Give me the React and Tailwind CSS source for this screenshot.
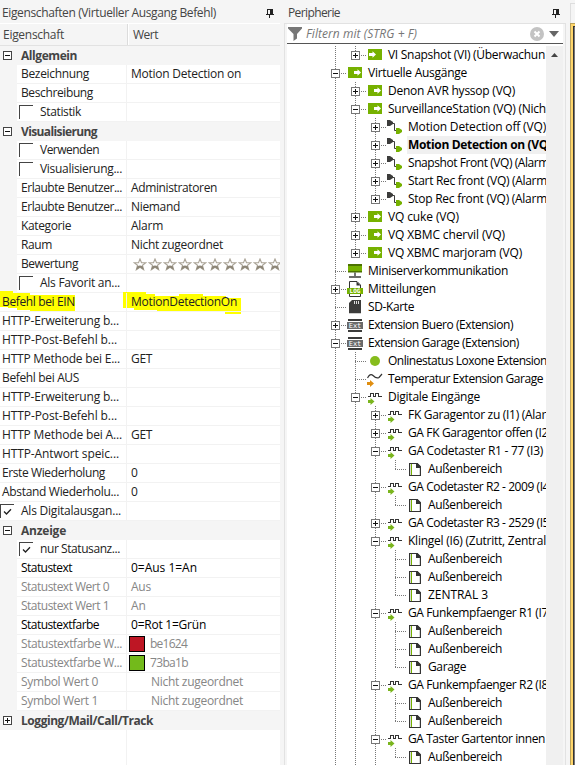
import { useLayoutEffect, useRef } from 'react';

// Text run whose letter spacing is tuned so that it takes up a given width.
function T({ w, children, className = '' }) {
  const ref = useRef(null);
  useLayoutEffect(() => {
    const el = ref.current;
    if (!w) return;
    el.style.letterSpacing = '0px';
    const natural = el.getBoundingClientRect().width;
    el.style.letterSpacing = `${(w - natural) / el.textContent.length}px`;
  }, [w]);
  return (
    <span ref={ref} className={`shrink-0 whitespace-pre ${className}`}>
      {children}
    </span>
  );
}

function Pin() {
  return (
    <svg width="8" height="9" viewBox="0 0 8 9" shapeRendering="crispEdges" className="shrink-0" fill="#222">
      <path d="M1 0h6v5h1v1H0V5h1zM2 1v4h2V1zM3 6h1v3H3z" fillRule="evenodd" />
    </svg>
  );
}

function Toggle({ open, tone = '#444' }) {
  return (
    <svg width="9" height="9" viewBox="0 0 9 9" shapeRendering="crispEdges" className="shrink-0">
      <rect x="0.5" y="0.5" width="8" height="8" fill="#fff" stroke={tone} />
      <path d={open ? 'M2 4h5v1H2z' : 'M2 4h5v1H2zM4 2h1v5H4z'} fill="#111" />
    </svg>
  );
}

function Check({ on }) {
  return (
    <div className="flex h-[14px] w-[14px] shrink-0 items-center justify-center border-t border-l border-[#444] bg-white">
      {on && (
        <svg width="9" height="8" viewBox="0 0 9 8">
          <path d="M1 3.5 3.5 6 8 1.2" fill="none" stroke="#222" strokeWidth="1.3" />
        </svg>
      )}
    </div>
  );
}

function Stars() {
  return (
    <div className="ml-[2px] flex shrink-0 gap-px pt-px">
      {Array.from({ length: 10 }, (_, i) => (
        <svg key={i} width="14" height="13" viewBox="0 0 14 13" className="shrink-0">
          <path d="M7 1 8.5 4.700H12.800L9.500 7.300 10.700 11.800 7 9.400 3.300 11.800 4.500 7.300 1.200 4.700H5.500Z" fill="#fff" stroke="#aaa497" strokeWidth="1.100" />
          <path d="M4.400 8 7 7.400 9.600 8 10.700 11.800 7 9.600 3.300 11.800Z" fill="#8d8677" />
        </svg>
      ))}
    </div>
  );
}

// kind: g = group header, i = indented property, p = plain property
const props = [
  { k: 'g', t: 'Allgemein', w: 56, open: true },
  { k: 'i', t: 'Bezeichnung', w: 68, v: 'Motion Detection on', vw: 110 },
  { k: 'i', t: 'Beschreibung', w: 72 },
  { k: 'i', t: 'Statistik', w: 41, c: 'off' },
  { k: 'g', t: 'Visualisierung', w: 76, open: true },
  { k: 'i', t: 'Verwenden', w: 59, c: 'off' },
  { k: 'i', t: 'Visualisierung...', w: 82, c: 'off' },
  { k: 'i', t: 'Erlaubte Benutzer...', w: 101, v: 'Administratoren', vw: 86 },
  { k: 'i', t: 'Erlaubte Benutzer...', w: 101, v: 'Niemand', vw: 49 },
  { k: 'i', t: 'Kategorie', w: 50, v: 'Alarm', vw: 32 },
  { k: 'i', t: 'Raum', w: 31, v: 'Nicht zugeordnet', vw: 92 },
  { k: 'i', t: 'Bewertung', w: 57, stars: true },
  { k: 'i', t: 'Als Favorit an...', w: 80, c: 'off' },
  { k: 'p', t: 'Befehl bei EIN', w: 73, v: 'MotionDetectionOn', vw: 106, mark: true },
  { k: 'p', t: 'HTTP-Erweiterung b...', w: 117 },
  { k: 'p', t: 'HTTP-Post-Befehl b...', w: 115 },
  { k: 'p', t: 'HTTP Methode bei E...', w: 118, v: 'GET', vw: 21 },
  { k: 'p', t: 'Befehl bei AUS', w: 77 },
  { k: 'p', t: 'HTTP-Erweiterung b...', w: 117 },
  { k: 'p', t: 'HTTP-Post-Befehl b...', w: 115 },
  { k: 'p', t: 'HTTP Methode bei A...', w: 120, v: 'GET', vw: 21 },
  { k: 'p', t: 'HTTP-Antwort speic...', w: 117 },
  { k: 'p', t: 'Erste Wiederholung', w: 103, v: '0', vw: 7 },
  { k: 'p', t: 'Abstand Wiederholu...', w: 117, v: '0', vw: 7 },
  { k: 'p', t: 'Als Digitalausgan...', w: 100, c: 'on' },
  { k: 'g', t: 'Anzeige', w: 45, open: true },
  { k: 'i', t: 'nur Statusanz...', w: 80, c: 'on' },
  { k: 'i', t: 'Statustext', w: 51, v: '0=Aus 1=An', vw: 66, black: true },
  { k: 'i', t: 'Statustext Wert 0', w: 88, v: 'Aus', vw: 20, dim: true },
  { k: 'i', t: 'Statustext Wert 1', w: 88, v: 'An', vw: 15, dim: true },
  { k: 'i', t: 'Statustextfarbe', w: 78, v: '0=Rot 1=Grün', vw: 75, black: true },
  { k: 'i', t: 'Statustextfarbe W...', w: 101, v: 'be1624', vw: 37, dim: true, sw: 'red' },
  { k: 'i', t: 'Statustextfarbe W...', w: 101, v: '73ba1b', vw: 38, dim: true, sw: 'green' },
  { k: 'i', t: 'Symbol Wert 0', w: 77, v: 'Nicht zugeordnet', vw: 92, dim: true, sw: 'none' },
  { k: 'i', t: 'Symbol Wert 1', w: 77, v: 'Nicht zugeordnet', vw: 92, dim: true, sw: 'none' },
  { k: 'g', t: 'Logging/Mail/Call/Track', w: 132, open: false },
];

const swatch = {
  red: 'mr-[5px] border border-black bg-[#be1624]',
  green: 'mr-[5px] border border-black bg-[#73ba1b]',
  none: 'mr-[6px]',
};

function PropRow({ r }) {
  if (r.k === 'g') {
    return (
      <div className="flex h-[19px] shrink-0 items-center bg-[#f5f5f5] pl-[3px] font-bold text-[#444]">
        <Toggle open={r.open} />
        <T w={r.w} className="ml-[9px]">{r.t}</T>
      </div>
    );
  }
  const tone = r.dim ? 'text-[#868686]' : r.black ? 'text-black' : 'text-[#222]';
  const indented = r.k === 'i';
  return (
    <div className={`relative flex h-[19px] shrink-0 ${tone}`}>
      {r.mark && (
        <svg width="245" height="26" viewBox="0 0 245 26" className="absolute -top-[3px] left-0" fill="#ff0">
          <path d="M0 1H13V3H30V5H75V21H30V20H17V18H8V17H0ZM123 2H146V4H155V6H179V4H203V6H226V8H241V24H225V22H212V21H177V22H157V20H134V18H123Z" />
        </svg>
      )}
      {indented && <div className="w-[17px] shrink-0 bg-[#f5f5f5]" />}
      <div className={`relative flex items-center border-b border-[#f2f2f2] ${indented ? 'w-[109px]' : 'w-[126px]'} ${r.c ? (indented ? 'pl-[2px]' : 'pl-0') : indented ? 'pl-1' : 'pl-[2px]'}`}>
        {r.c && <Check on={r.c === 'on'} />}
        <T w={r.w} className={r.c ? 'ml-[7px]' : ''}>{r.t}</T>
      </div>
      <div className="relative flex w-[154px] items-center overflow-hidden border-b border-l border-[#f2f2f2] pl-1">
        {r.sw && <div className={`-ml-[2px] h-4 w-4 shrink-0 ${swatch[r.sw]}`} />}
        {r.stars && <Stars />}
        {r.v && <T w={r.vw}>{r.v}</T>}
      </div>
    </div>
  );
}

const icons = {
  out: (
    <>
      <rect x="1" y="3" width="14" height="11" fill="#76b100" />
      <path d="M7 7h3.500V5.200L14 8.500 10.500 11.800V10H7z" fill="#fff" />
    </>
  ),
  inp: (
    <>
      <rect x="1" y="3" width="14" height="11" fill="#76b100" />
      <path d="M2 7h3.500V5.200L9 8.500 5.500 11.800V10H2z" fill="#fff" />
    </>
  ),
  cmd: (
    <>
      <path d="M0 2h3l3 2v2L3 8H0z" fill="#3c3c3b" />
      <path d="M5.500 5.500h2v7h2" fill="none" stroke="#3c3c3b" />
      <path d="M9 10h3l3 2v2l-3 2H9z" fill="#76b100" />
    </>
  ),
  mini: (
    <>
      <rect x="1" y="2" width="14" height="2" fill="#4c7200" />
      <rect x="1" y="4" width="14" height="5" fill="#76b100" />
      <rect x="1" y="9" width="14" height="1.500" fill="#4c7200" />
      <path d="M7.300 10.500h1.400V14H7.300zM2 14.200h12v1.600H2z" fill="#3c3c3b" />
    </>
  ),
  log: (
    <>
      <path d="M2.500 1.500h7.500l3.500 3.500v11.500h-11z" fill="#fff" stroke="#333" />
      <path d="M9.500 1.500v4h4z" fill="#333" />
      <rect x="0" y="8" width="16" height="6" fill="#76b100" />
      <text x="8" y="13.200" fontSize="6" fontWeight="bold" textAnchor="middle" fill="#fff" fontFamily="DejaVu Sans Mono">LOG</text>
    </>
  ),
  sd: (
    <>
      <path d="M5 2h9v13.300H2V5z" fill="#3c3c3b" />
      <path d="M7.500 3v3M9.500 3v3M11.500 3v3" stroke="#ddd" />
    </>
  ),
  ext: (
    <>
      <path d="M1 3h14v2H1zM1 14h14v2H1z" fill="#3c3c3b" />
      <rect x="0" y="6" width="16" height="7" fill="#6a6a6a" />
      <text x="8" y="12" fontSize="7" textAnchor="middle" fill="#fff" fontFamily="DejaVu Sans Mono">Ext</text>
    </>
  ),
  dot: <circle cx="8" cy="9" r="5" fill="#86bc1c" />,
  temp: (
    <>
      <path d="M0.500 8C2 5 4 3.500 6 5.500S9.500 9 12 7.500L15 4" fill="none" stroke="#333" strokeWidth="1.200" />
      <path d="M0 12h3v-2l4 3.500-4 3.500v-2H0z" fill="#e08e10" />
    </>
  ),
  dig: (
    <>
      <path d="M1 8.500h2.500v-3h3v3h2v-3h3v3H15" fill="none" stroke="#333" shapeRendering="crispEdges" transform="translate(0 0)" />
      <path d="M1 12h2.500v-2l4 3.500-4 3.500v-2H1z" fill="#7ab51d" />
    </>
  ),
  page: (
    <>
      <path d="M2.600 3.500h7.500l3.300 3.300v8.700h-10.800z" fill="#fff" stroke="#333" strokeWidth="1.200" />
      <path d="M9 3h1.500L14 6.500V8H9z" fill="#333" />
      <path d="M4.500 4v11" stroke="#76b100" />
    </>
  ),
};

// l = level, g = continuing guide lines of the parent levels, s = + / - box, e = last child
const tree = [
  { l: 2, g: '1', s: '+', i: 'inp', t: 'VI Snapshot (VI) (Überwachun', w: 157, e: 1 },
  { l: 1, g: '', s: '-', i: 'out', t: 'Virtuelle Ausgänge', w: 99 },
  { l: 2, g: '1', s: '+', i: 'out', t: 'Denon AVR hyssop (VQ)', w: 127 },
  { l: 2, g: '1', s: '-', i: 'out', t: 'SurveillanceStation (VQ) (Nich', w: 158 },
  { l: 3, g: '11', s: '+', i: 'cmd', t: 'Motion Detection off (VQ)', w: 138 },
  { l: 3, g: '11', s: '+', i: 'cmd', t: 'Motion Detection on (VQ', w: 140, sel: 1 },
  { l: 3, g: '11', s: '+', i: 'cmd', t: 'Snapshot Front (VQ) (Alarm', w: 141 },
  { l: 3, g: '11', s: '+', i: 'cmd', t: 'Start Rec front (VQ) (Alarm', w: 139 },
  { l: 3, g: '11', s: '+', i: 'cmd', t: 'Stop Rec front (VQ) (Alarm', w: 139, e: 1 },
  { l: 2, g: '1', s: '+', i: 'out', t: 'VQ cuke (VQ)', w: 71 },
  { l: 2, g: '1', s: '+', i: 'out', t: 'VQ XBMC chervil (VQ)', w: 117 },
  { l: 2, g: '1', s: '+', i: 'out', t: 'VQ XBMC marjoram (VQ)', w: 134, e: 1 },
  { l: 1, g: '', i: 'mini', t: 'Miniserverkommunikation', w: 140 },
  { l: 1, g: '', s: '+', i: 'log', t: 'Mitteilungen', w: 68 },
  { l: 1, g: '', i: 'sd', t: 'SD-Karte', w: 46 },
  { l: 1, g: '', s: '+', i: 'ext', t: 'Extension Buero (Extension)', w: 145 },
  { l: 1, g: '', s: '-', i: 'ext', t: 'Extension Garage (Extension)', w: 151 },
  { l: 2, g: '1', i: 'dot', t: 'Onlinestatus Loxone Extension', w: 159 },
  { l: 2, g: '1', i: 'temp', t: 'Temperatur Extension Garage', w: 155 },
  { l: 2, g: '1', s: '-', i: 'dig', t: 'Digitale Eingänge', w: 92 },
  { l: 3, g: '11', s: '+', i: 'dig', t: 'FK Garagentor zu (I1) (Alar', w: 138 },
  { l: 3, g: '11', s: '+', i: 'dig', t: 'GA FK Garagentor offen (I2', w: 140 },
  { l: 3, g: '11', s: '-', i: 'dig', t: 'GA Codetaster R1 - 77 (I3)', w: 135 },
  { l: 4, g: '111', i: 'page', t: 'Außenbereich', w: 74, e: 1 },
  { l: 3, g: '11', s: '-', i: 'dig', t: 'GA Codetaster R2 - 2009 (I4', w: 141 },
  { l: 4, g: '111', i: 'page', t: 'Außenbereich', w: 74, e: 1 },
  { l: 3, g: '11', s: '+', i: 'dig', t: 'GA Codetaster R3 - 2529 (I5', w: 141 },
  { l: 3, g: '11', s: '-', i: 'dig', t: 'Klingel (I6) (Zutritt, Zentral', w: 138 },
  { l: 4, g: '111', i: 'page', t: 'Außenbereich', w: 74 },
  { l: 4, g: '111', i: 'page', t: 'Außenbereich', w: 74 },
  { l: 4, g: '111', i: 'page', t: 'ZENTRAL 3', w: 60, e: 1 },
  { l: 3, g: '11', s: '-', i: 'dig', t: 'GA Funkempfaenger R1 (I7', w: 140 },
  { l: 4, g: '111', i: 'page', t: 'Außenbereich', w: 74 },
  { l: 4, g: '111', i: 'page', t: 'Außenbereich', w: 74 },
  { l: 4, g: '111', i: 'page', t: 'Garage', w: 38, e: 1 },
  { l: 3, g: '11', s: '-', i: 'dig', t: 'GA Funkempfaenger R2 (I8', w: 140 },
  { l: 4, g: '111', i: 'page', t: 'Außenbereich', w: 74 },
  { l: 4, g: '111', i: 'page', t: 'Außenbereich', w: 74, e: 1 },
  { l: 3, g: '11', s: '-', i: 'dig', t: 'GA Taster Gartentor innen', w: 137 },
  { l: 4, g: '111', i: 'page', t: 'Außenbereich', w: 74, e: 1 },
];

const dotsDown = 'w-px bg-[repeating-linear-gradient(to_bottom,#777_0px,#777_1px,transparent_1px,transparent_2px)]';
const dotsAcross = 'h-px bg-[repeating-linear-gradient(to_right,#777_0px,#777_1px,transparent_1px,transparent_2px)]';

function TreeRow({ r }) {
  return (
    <div className="flex h-[18px] shrink-0">
      {r.g.split('').map((_, i) => (
        <div key={i} className="w-5 shrink-0 pl-[10px]">
          <div className={`h-full ${dotsDown}`} />
        </div>
      ))}
      <div className="relative w-5 shrink-0 pl-[10px]">
        <div className={`${dotsDown} ${r.e ? 'h-[10px]' : 'h-full'}`} />
        <div className={`absolute top-[9px] left-[10px] w-3 ${dotsAcross}`} />
        {r.s && (
          <div className="absolute top-[5px] left-[6px]">
            <Toggle open={r.s === '-'} tone="#777" />
          </div>
        )}
      </div>
      <svg width="16" height="18" viewBox="0 0 16 18" className="ml-[2px] shrink-0">
        {icons[r.i]}
      </svg>
      <div className={`ml-1 flex items-center pl-px ${r.sel ? 'flex-1 bg-[#f0f0f0] font-bold' : ''}`}>
        <T w={r.w}>{r.t}</T>
      </div>
    </div>
  );
}

export default function App() {
  return (
    <div className="flex h-[765px] w-[575px] overflow-hidden bg-[#f5f5f5] font-['Open_Sans','Noto_Sans',sans-serif] text-[12px] leading-[18px] text-[#222]">
      <div className="flex w-[280px] shrink-0 flex-col">
        <div className="flex h-[23px] shrink-0 items-center justify-between pt-[3px] pr-[6px] pl-[2px] text-[#444]">
          <T w={214}>Eigenschaften (Virtueller Ausgang Befehl)</T>
          <Pin />
        </div>
        <div className="flex h-[23px] shrink-0 border-t border-b border-t-white border-b-[#e2e2e2] text-[#444]">
          <div className="flex w-[128px] items-center border-r border-[#dcdcdc] pl-[3px]">
            <T w={61}>Eigenschaft</T>
          </div>
          <div className="flex flex-1 items-center border-l border-white pl-1">
            <T w={25}>Wert</T>
          </div>
        </div>
        <div className="flex flex-1 flex-col bg-white">
          {props.map((r, i) => (
            <PropRow key={i} r={r} />
          ))}
          <div className="ml-[126px] flex-1 border-l border-[#f2f2f2]" />
        </div>
      </div>

      <div className="flex w-[286px] shrink-0 flex-col pl-1">
        <div className="flex h-[23px] shrink-0 items-center justify-between pt-[3px] pr-[6px] pl-1 text-[#444]">
          <T w={52}>Peripherie</T>
          <Pin />
        </div>
        <div className="flex flex-1 flex-col overflow-hidden border-t border-r border-l border-[#e2e2e2] pr-[2px] pl-[2px]">
          <div className="flex h-5 shrink-0 items-center border-b border-[#555] bg-white pl-px">
            <svg width="14" height="14" viewBox="0 0 14 14" className="shrink-0" fill="#777">
              <path d="M0 0h14v1.500L9 7v4.500L5.500 14V7L0 1.500z" />
            </svg>
            <T w={111} className="ml-[4px] text-[#777] italic">Filtern mit (STRG + F)</T>
            <svg width="14" height="14" viewBox="0 0 14 14" className="ml-auto shrink-0">
              <circle cx="7" cy="7" r="7" fill="#c3c3c3" />
              <path d="M4.500 4.500l5 5M9.500 4.500l-5 5" stroke="#fff" strokeWidth="2" />
            </svg>
            <svg width="10" height="6" viewBox="0 0 10 6" className="mr-[4px] ml-[5px] shrink-0" fill="#666">
              <path d="M0 0h10L5 6z" />
            </svg>
          </div>
          <div className="flex flex-1 overflow-hidden bg-white pt-[2px]">
            <div className="flex h-[720px] w-[259px] shrink-0 flex-col overflow-hidden pl-[38px] text-black">
              {tree.map((r, i) => (
                <TreeRow key={i} r={r} />
              ))}
            </div>
            <div className="flex flex-1 justify-center bg-[#f0f0f0] pt-[7px]">
              <svg width="7" height="4" viewBox="0 0 7 4" fill="#444">
                <path d="M3.500 0 7 4H0z" />
              </svg>
            </div>
          </div>
        </div>
      </div>

      <div className="flex flex-1 flex-col pt-[3px] pl-[4px]">
        <div className="h-5 border-t border-l border-[#dedede]" />
        <div className="flex flex-1 border-t border-l border-[#b9a25c] bg-[#ffd66b] pt-[2px] pl-[2px]">
          <div className="flex-1 border-t border-l border-[#333] bg-[#777]" />
        </div>
      </div>
    </div>
  );
}
